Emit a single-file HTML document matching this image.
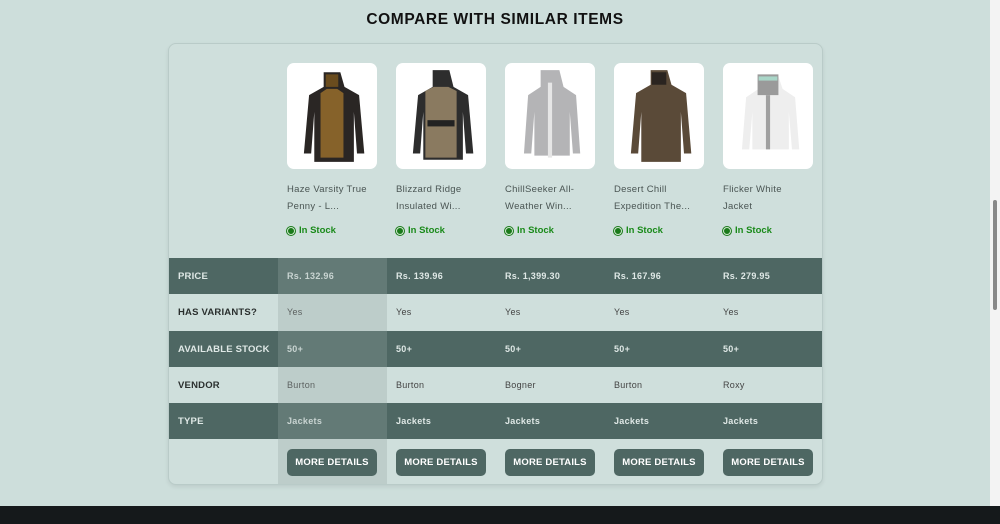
<!DOCTYPE html>
<html><head><meta charset="utf-8"><style>
*{box-sizing:border-box;margin:0;padding:0}
body{width:1000px;height:524px;overflow:hidden;background:#cddedb;font-family:"Liberation Sans",sans-serif;position:relative}
h2{position:absolute;top:11px;left:0;width:990px;text-align:center;font-size:15.5px;font-weight:bold;color:#111;letter-spacing:.6px}
.card{position:absolute;left:168px;top:43px;width:655px;height:442px;border:1px solid #b9cbc8;border-radius:8px;background:#cfdfdc;box-shadow:0 2px 4px rgba(0,0,0,.08);overflow:hidden}
.hl{position:absolute;left:109px;top:214px;width:109px;height:228px;background:rgba(150,165,162,.3)}
.prod{position:absolute;top:19px;width:91px}
.img{width:90px;height:106px;background:#fff;border-radius:7px;display:flex;align-items:center;justify-content:center}
.name{margin-top:12px;font-size:9.5px;line-height:17px;color:#4a5553;letter-spacing:.3px;height:34px}
.stock{margin-top:10px;font-size:9.5px;color:#1a8a1a;font-weight:bold;display:flex;align-items:center}
.stock i{display:inline-block;width:8px;height:8px;border-radius:50%;background:#1a7a1a;border:1.5px solid #cfe6cf;margin-right:4px;box-shadow:0 0 0 1px #1a7a1a}
.row{position:absolute;left:0;width:655px;height:36px;font-size:9px;display:flex;align-items:center}
.row.d{background:#4e6763;color:#dfe8e6}
.row.l{color:#444}
.row .lab{width:109px;padding-left:9px;font-weight:bold;font-size:9.5px;letter-spacing:.2px}
.row.l .lab{color:#2a2f2e}
.row .c{width:109px;padding-left:9px;letter-spacing:.3px}
.row.d .c{font-weight:bold}
.btn{position:absolute;top:405px;width:90px;height:27px;background:#4e6763;border-radius:5px;color:#fff;font-size:9.5px;font-weight:bold;display:flex;align-items:center;justify-content:center;letter-spacing:.2px}
.foot{position:absolute;left:0;top:506px;width:1000px;height:18px;background:#15191b}
.sb{position:absolute;left:990px;top:0;width:10px;height:506px;background:#f3f3f3}
.sb i{position:absolute;left:3px;top:200px;width:4px;height:110px;background:#888;border-radius:2px}
</style></head><body>
<h2>COMPARE WITH SIMILAR ITEMS</h2>
<div class="card">
<div class="row d" style="top:214px"><div class="lab">PRICE</div><div class="c">Rs. 132.96</div><div class="c">Rs. 139.96</div><div class="c">Rs. 1,399.30</div><div class="c">Rs. 167.96</div><div class="c">Rs. 279.95</div></div>
<div class="row l" style="top:250px"><div class="lab">HAS VARIANTS?</div><div class="c">Yes</div><div class="c">Yes</div><div class="c">Yes</div><div class="c">Yes</div><div class="c">Yes</div></div>
<div class="row d" style="top:287px"><div class="lab">AVAILABLE STOCK</div><div class="c">50+</div><div class="c">50+</div><div class="c">50+</div><div class="c">50+</div><div class="c">50+</div></div>
<div class="row l" style="top:323px"><div class="lab">VENDOR</div><div class="c">Burton</div><div class="c">Burton</div><div class="c">Bogner</div><div class="c">Burton</div><div class="c">Roxy</div></div>
<div class="row d" style="top:359px"><div class="lab">TYPE</div><div class="c">Jackets</div><div class="c">Jackets</div><div class="c">Jackets</div><div class="c">Jackets</div><div class="c">Jackets</div></div>
<div class="hl"></div>

<div class="prod" style="left:118px"><div class="img"><svg width="80" height="100" viewBox="0 0 70 96"><path d="M27 6h16l4 14 14 8 5 56h-7l-3-40v48H18V44l-3 40H8l5-56 14-8z" fill="#2a2624"/><path d="M24 26l6-4h10l6 4v62H24z" fill="#86622a"/><path d="M29 8h12v12H29z" fill="#6a4c1e"/></svg></div><div class="name">Haze Varsity True<br>Penny - L...</div><div class="stock"><i></i>In Stock</div></div>
<div class="prod" style="left:227px"><div class="img"><svg width="80" height="100" viewBox="0 0 70 96"><path d="M27 4h16l4 16 14 8 5 56h-7l-3-40v46H18V44l-3 40H8l5-56 14-8z" fill="#2d2d2d"/><path d="M20 24l8-4h14l8 4v64H20z" fill="#8a7a60"/><rect x="22" y="52" width="26" height="6" fill="#222"/></svg></div><div class="name">Blizzard Ridge<br>Insulated Wi...</div><div class="stock"><i></i>In Stock</div></div>
<div class="prod" style="left:336px"><div class="img"><svg width="80" height="100" viewBox="0 0 70 96"><path d="M26 4h18l4 16 12 8 4 56h-7l-3-40v42H20V44l-3 40h-7l4-56 12-8z" fill="#b4b4b6"/><path d="M33 16h4v72h-4z" fill="#e6e6e6"/></svg></div><div class="name">ChillSeeker All-<br>Weather Win...</div><div class="stock"><i></i>In Stock</div></div>
<div class="prod" style="left:445px"><div class="img"><svg width="80" height="100" viewBox="0 0 70 96"><path d="M27 4h16l4 14 14 8 5 58h-7l-3-40v48H18V44l-3 40H8l5-58 14-8z" fill="#5a4a38"/><path d="M28 6h14v12H28z" fill="#2a2420"/></svg></div><div class="name">Desert Chill<br>Expedition The...</div><div class="stock"><i></i>In Stock</div></div>
<div class="prod" style="left:554px"><div class="img"><svg width="80" height="100" viewBox="0 0 70 96"><path d="M25 10h20l4 12 12 8 4 50h-7l-3-36v36H20V44l-3 36h-7l4-50 12-8z" fill="#eeeeee"/><path d="M25 8h20v20H25z" fill="#9a9a9a"/><rect x="26" y="10" width="18" height="4" fill="#a9d6c8"/><path d="M33 28h4v52h-4z" fill="#a0a0a0"/></svg></div><div class="name">Flicker White<br>Jacket</div><div class="stock"><i></i>In Stock</div></div>

<div class="btn" style="left:118px">MORE DETAILS</div>
<div class="btn" style="left:227px">MORE DETAILS</div>
<div class="btn" style="left:336px">MORE DETAILS</div>
<div class="btn" style="left:445px">MORE DETAILS</div>
<div class="btn" style="left:554px">MORE DETAILS</div>
</div>
<div class="foot"></div>
<div class="sb"><i></i></div>
</body></html>
